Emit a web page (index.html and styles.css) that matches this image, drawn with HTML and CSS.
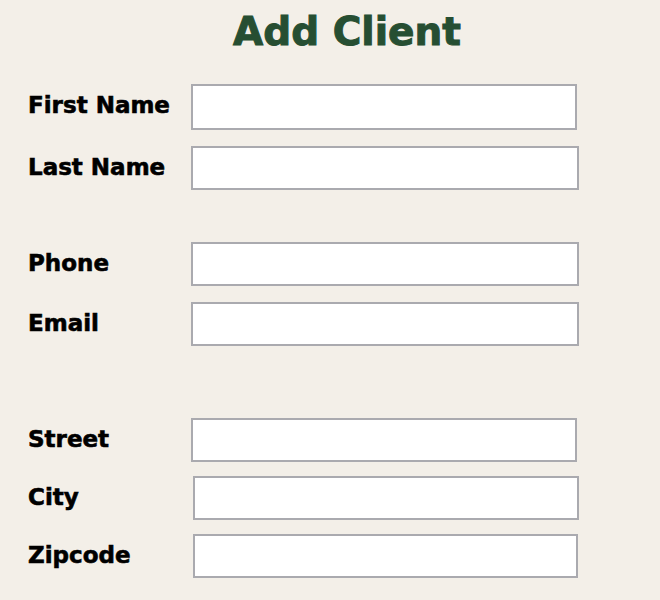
FILE: index.html
```html
<!DOCTYPE html>
<html lang="en">
<head>
<meta charset="utf-8">
<title>Add Client</title>
<link rel="stylesheet" href="styles.css">
</head>
<body>
<main class="page">
  <h1 class="title">Add Client</h1>
  <form class="client-form">
    <div class="group group-name">
      <label class="row"><span class="label">First Name</span><input class="field field-tall" type="text"></label>
      <label class="row"><span class="label">Last Name</span><input class="field field-wide" type="text"></label>
    </div>
    <div class="group group-contact">
      <label class="row"><span class="label">Phone</span><input class="field field-wide" type="text"></label>
      <label class="row"><span class="label">Email</span><input class="field field-wide" type="text"></label>
    </div>
    <div class="group group-address">
      <label class="row"><span class="label">Street</span><input class="field" type="text"></label>
      <label class="row"><span class="label">City</span><input class="field field-shift" type="text"></label>
      <label class="row"><span class="label">Zipcode</span><input class="field field-shift field-narrow" type="text"></label>
    </div>
  </form>
</main>
</body>
</html>
```
FILE: styles.css
```css
html, body {
  margin: 0;
  padding: 0;
  background: #f3efe8;
}

body {
  font-family: "DejaVu Sans", "Liberation Sans", sans-serif;
  color: #000;
  height: 600px;
  overflow: hidden;
}

.page {
  display: flex;
  flex-direction: column;
}

.title {
  margin: 9px 0 0 0;
  padding-left: 34px;
  text-align: center;
  font-size: 39px;
  line-height: 46px;
  font-weight: bold;
  color: #264e32;
  -webkit-text-stroke: 1px #264e32;
}

.client-form {
  display: flex;
  flex-direction: column;
  padding-left: 28px;
  margin-top: 29px;
}

.group {
  display: flex;
  flex-direction: column;
}

.group-name { gap: 16px; }
.group-contact { gap: 16px; margin-top: 52px; }
.group-address { gap: 14px; margin-top: 72px; }

.row {
  display: flex;
  align-items: flex-start;
}

.label {
  width: 163px;
  flex: none;
  padding-top: 8px;
  font-size: 23px;
  line-height: 26px;
  font-weight: bold;
  -webkit-text-stroke: 0.6px #000;
}

.field {
  box-sizing: border-box;
  width: 386px;
  height: 44px;
  margin: 0;
  border: 2px solid #aaaaaf;
  background: #fff;
  padding: 4px 8px;
  font: 18px "Liberation Sans", sans-serif;
  outline: none;
}

.field-tall {
  height: 46px;
}

.field-wide {
  width: 388px;
}

.field-shift {
  margin-left: 2px;
  width: 386px;
}

.field-narrow {
  width: 385px;
}
```
